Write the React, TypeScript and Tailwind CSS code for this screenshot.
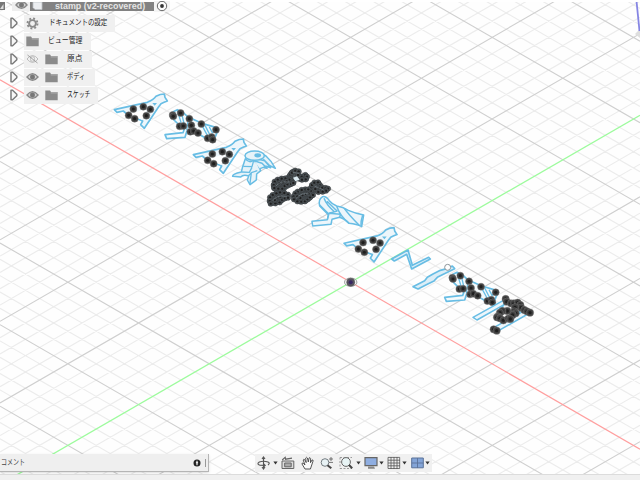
import React from "react";

const CX = 350.7;
const CY = 282.2;
const SLOPE = 40.8 / 70.7;
const BLUE = "#68bde4";

function gridLine(k: number, dir: 1 | -1) {
  const c = CY + k * 16.32;
  return `M0 ${c - dir * SLOPE * CX}L640 ${c + dir * SLOPE * (640 - CX)}`;
}

const steps = Array.from({ length: 90 }, (_, i) => i - 45);
const minor = steps
  .filter((k) => k % 5 !== 0)
  .map((k) => gridLine(k, 1) + gridLine(k, -1))
  .join("");
const major = steps
  .filter((k) => k % 5 === 0 && k !== 0)
  .map((k) => gridLine(k, 1) + gridLine(k, -1))
  .join("");

type P = [number, number];

function Dots({ pts, r = 10.5, dense = false }: { pts: P[]; r?: number; dense?: boolean }) {
  return (
    <g>
      {pts.map(([x, y], i) => (
        <g key={i}>
          <circle cx={x} cy={y} r={r} fill={dense ? "#4b5155" : "#404040"} stroke={dense ? "#333638" : "#777777"} strokeWidth={1.5} />
          <circle cx={x} cy={y} r={r * 0.45} fill="#1e1e1e" />
        </g>
      ))}
    </g>
  );
}

function LetterA({ x, y }: { x: number; y: number }) {
  return (
    <g transform={`translate(${x} ${y}) scale(.33333)`}>
      <path d="M43 74L142 52Q160 45 168 34Q181 27 193 27L195 37L202 48Q192 52 183 56L176 65L133 130L122 119L128 108L121 105L87 94L77 84L70 78L51 82Z" fill="#edf6fb" stroke={BLUE} strokeWidth={5} strokeLinejoin="round" />
      <path d="M84 86L141 73L126 104Z" fill="#fff" />
      <path d="M157 54L171 54L164 62Z" fill={BLUE} />
      <Dots pts={[[100, 72], [130, 65], [151, 73], [139, 92], [86, 91], [104, 101]]} />
    </g>
  );
}

function LetterS({ x, y }: { x: number; y: number }) {
  return (
    <g transform={`translate(${x} ${y}) scale(.33333)`} strokeLinejoin="round">
      <path d="M218 90L220 80L232 74L249 82L264 96L306 115L350 128L354 136L346 155L338 169L322 162L294 146L260 140L255 157L200 161L195 149L249 143L256 124L239 121L222 105Z" fill="#f4fafc" stroke={BLUE} strokeWidth={5} />
      <path d="M232 76L243 112L240 125M245 85L253 120M303 116L322 151M315 121L337 164M328 126L337 143L352 132M265 100L260 137" fill="none" stroke={BLUE} strokeWidth={4} />
      <Dots pts={[[218, 90], [220, 94], [242, 84], [268, 101], [304, 117], [348, 134], [239, 124], [250, 123], [274, 121], [271, 140], [281, 138], [294, 144], [323, 160], [335, 156], [338, 164]]} />
    </g>
  );
}

const clusterDots: P[] = [
  [106, 60], [111, 53], [121, 47], [131, 49], [129, 60], [140, 65], [151, 60], [156, 65], [152, 73], [141, 74], [105, 69],
  [116, 78], [103, 74], [91, 70], [80, 71], [68, 74], [59, 80], [56, 90], [58, 99], [70, 101], [82, 101], [89, 93], [98, 88], [108, 87], [115, 84], [73, 85], [84, 82], [95, 79],
  [99, 119], [88, 114], [75, 112], [64, 115], [53, 120], [45, 127], [44, 138], [47, 146], [61, 145], [74, 142], [81, 134], [90, 130], [99, 128], [65, 128], [76, 125], [59, 135],
  [151, 103], [140, 105], [128, 110], [121, 115], [116, 124], [117, 133], [127, 139], [139, 140], [150, 139], [158, 133], [165, 127], [174, 120], [167, 108], [160, 103], [143, 121], [153, 117], [136, 129], [127, 124], [161, 116],
  [169, 97], [171, 90], [178, 83], [189, 82], [195, 91], [193, 98], [202, 98], [212, 99], [219, 101], [213, 107], [203, 110], [190, 111], [181, 102],
];

const cluster2: P[] = [
  [317, 177], [320, 185], [333, 190], [342, 190], [353, 188], [361, 195], [363, 203], [373, 210], [381, 214], [390, 218], [345, 202], [343, 214], [347, 220], [338, 225], [322, 213], [307, 213], [300, 218], [294, 229], [291, 232], [300, 235], [310, 241], [325, 236], [331, 237], [281, 268], [290, 272],
];

function Scene() {
  return (
    <svg className="absolute inset-0" width="640" height="480" viewBox="0 0 640 480">
      <path d={minor} stroke="#ececec" strokeWidth={1.15} fill="none" />
      <path d={major} stroke="#cfcfcf" strokeWidth={1.1} fill="none" />
      <path d={gridLine(0, 1)} stroke="#ff9f9f" strokeWidth={1.2} />
      <path d={gridLine(0, -1)} stroke="#9dfb9d" strokeWidth={1.3} />

      <LetterA x={100} y={85} />
      <LetterS x={100} y={85} />
      <LetterA x={179} y={130} />

      <g transform="translate(180 130) scale(.33333)" stroke={BLUE} strokeWidth={4.5} strokeLinejoin="round" fill="#e6f3f9">
        <path d="M188 110L196 86Q206 100 220 92L232 100L242 122L230 132L229 150L210 164L202 150L206 138Q190 132 182 141L158 139Q156 132 184 126Z" />
        <path d="M222 92L246 100L261 115L250 112L240 116M230 86L254 92L272 113L256 108M246 72L258 78Q276 94 286 115L268 106L250 88" />
        <ellipse cx="224" cy="77" rx="29" ry="14" />
        <ellipse cx="233" cy="76" rx="8" ry="4" fill={BLUE} />
        <path d="M190 109L216 110L221 92M185 126L208 127L216 112M205 138L214 128L232 122M214 128L210 160" fill="none" strokeWidth={4} />
      </g>

      <g transform="translate(255 155) scale(.33333)">
        <path d="M98 56Q108 37 124 41L138 57L155 53Q165 62 160 78L140 82L120 77L122 87Q108 98 96 103L90 110L105 118Q110 130 92 137Q73 154 42 152Q34 142 40 126L58 110Q44 105 50 84Q65 62 92 64ZM113 118Q130 94 162 97L176 77L197 78L204 92L226 98Q223 112 203 118L181 115L178 126Q160 149 132 148L110 135Z" fill="#4d5458" />
        <Dots pts={clusterDots} r={8} dense />
        <g fill="none" stroke="#78838a" strokeWidth={2}>
          <path d="M63 93Q75 77 104 81M53 138Q63 119 95 124M123 131Q139 111 163 117M178 93L206 105M113 52L132 55" />
        </g>
        <path d="M114 68L126 64L134 74L121 79Z" fill="#dcebf2" />
        <g stroke={BLUE} strokeWidth={4.5} strokeLinejoin="round" fill="#edf6fb">
          <path d="M203 125Q189 133 194 153L220 179L217 194L171 199L173 213L228 208L231 193L254 187Q271 192 282 205Q306 207 320 215L326 180Q298 174 280 166Q264 156 245 153Q231 147 223 137Q213 123 203 125Z" />
          <path d="M207 130Q215 151 239 171M194 150L222 178M216 139L246 168L223 175M245 154Q256 185 282 205M268 160Q280 178 314 212M323 181Q317 199 318 212M217 194L222 175L256 178L254 188" fill="none" />
        </g>
      </g>

      <LetterA x={329.7} y={218.6} />

      <g transform="translate(330 190) scale(.33333)" stroke={BLUE} strokeWidth={5} strokeLinejoin="round" fill="#dceef7">
        <path d="M185 207L234 180L247 226L296 202L301 207L245 237L230 193L193 213Z" />
        <path d="M249 290L264 297L295 281L312 273L322 262L337 254L374 236L367 228L350 236L331 241L309 252L292 262L284 272Z" />
      </g>

      <LetterS x={379.7} y={247.7} />

      <g transform="translate(400 240) scale(.33333)">
        <circle cx="143" cy="82" r="9" fill="#fff" stroke="#8b9499" strokeWidth={3} />
        <g stroke={BLUE} strokeWidth={4.5} strokeLinejoin="round" fill="#edf6fb">
          <path d="M219 232L309 182L323 188L231 240Z" />
          <path d="M281 263L375 211L389 219L292 274Z" />
          <path d="M316 186L363 210L346 228L302 239L298 217Z" fill="none" />
        </g>
        <Dots pts={cluster2} r={11} />
      </g>

      <ellipse cx="350.7" cy="282.2" rx="6.2" ry="4.2" fill="#eee" fillOpacity={0.7} stroke="#888" strokeWidth={0.8} />
      <circle cx="350.7" cy="282.2" r="4" fill="#57525f" stroke="#555" strokeWidth={0.6} />
      <circle cx="350.7" cy="282.2" r="2" fill="#392763" />

      <path d="M640 29L635 34L640 38Z" fill="#dedede" />
      <path d="M636.6 2L639.5 31" stroke="#8585e4" strokeWidth={1.8} />
    </svg>
  );
}

function Eye({ hidden = false }: { hidden?: boolean }) {
  return (
    <svg width="13" height="12" viewBox="0 0 13 12" className="shrink-0" fill="none">
      <path d="M1 6Q6.5-.8 12 6Q6.5 12.8 1 6Z" fill={hidden ? "#f7f7f7" : "#ddd"} stroke={hidden ? "#aaa" : "#888"} strokeWidth={hidden ? 0.8 : 1.4} />
      <circle cx="6.5" cy="6" r="2.3" fill={hidden ? "#eee" : "#777"} stroke={hidden ? "#aaa" : "#777"} strokeWidth={0.7} />
      {hidden && <path d="M1.5 2L11.5 10" stroke="#999" strokeWidth={0.9} />}
    </svg>
  );
}

function Folder() {
  return (
    <svg width="13" height="11" viewBox="0 0 13 11" className="shrink-0">
      <path d="M.3 .6H5L6 2.1H12.7V10.2H.3Z" fill="#8b8b8b" />
      <path d="M5.8 2.9H12.7" stroke="#c9c9c9" strokeWidth={0.7} />
    </svg>
  );
}

function Gear() {
  return (
    <svg width="13" height="13" viewBox="0 0 13 13" className="shrink-0" fill="none" stroke="#8a8a8a">
      <circle cx="6.5" cy="6.5" r="3.4" strokeWidth={1.9} />
      <circle cx="6.5" cy="6.5" r="5" strokeWidth={1.9} strokeDasharray="1.9 2.03" />
    </svg>
  );
}

function Row({ width, icon, eye, label, scale, gap }: { width: string; icon: React.ReactNode; eye?: React.ReactNode; label: string; scale: string; gap: string }) {
  return (
    <div className="flex h-[18px] items-center pl-[9px]">
      <svg width="15" height="12" viewBox="0 0 15 12" className="shrink-0">
        <path d="M2 1.2V10.8H3.6L7.8 6.7V5.3L3.6 1.2Z" fill="#f7f7f7" stroke="#7c7c7c" strokeWidth={1.5} strokeLinejoin="round" />
      </svg>
      <div className={`flex h-[17px] items-center bg-[#f0f0f0] pl-[2px] ${width}`}>
        {eye && <span className="mr-[6px] flex">{eye}</span>}
        {icon}
        <span className={`inline-block origin-left whitespace-nowrap text-[8px] leading-none text-[#222] ${gap} ${scale}`}>{label}</span>
      </div>
    </div>
  );
}

function Browser() {
  return (
    <div className="flex w-[180px] flex-col">
      <div className="flex h-[9px] items-center">
        <svg width="5" height="9" viewBox="0 0 5 9" className="shrink-0">
          <path d="M0 0H5V8H0Z" fill="#777" />
          <path d="M0 7L3.5 2V7Z" fill="#ddd" />
        </svg>
        <div className="ml-[7px] flex h-[9px] w-[18px] items-start justify-center overflow-hidden bg-[#eee]">
          <div className="-mt-[3px]"><Eye /></div>
        </div>
        <div className="flex h-[9px] w-[124px] items-center bg-[#828282] pl-[2px]">
          <svg width="11" height="9" viewBox="0 0 11 9" className="shrink-0">
            <path d="M1 0V5.5L3 7.5H10V0Z" fill="#eceef1" stroke="#bcc0c5" strokeWidth={0.8} />
          </svg>
          <span className="ml-[12px] inline-block origin-left whitespace-nowrap text-[9px] font-bold leading-[9px] text-[#e6e6e6] scale-x-[0.99]">stamp (v2-recovered)</span>
        </div>
        <svg width="16" height="11" viewBox="0 0 16 11" className="shrink-0 bg-[#f4f4f4]">
          <circle cx="8" cy="5" r="4.7" fill="#fafafa" stroke="#666" strokeWidth={1} />
          <circle cx="8" cy="5" r="1.9" fill="#333" />
        </svg>
      </div>
      <div className="flex flex-col pt-[3px]">
        <Row width="w-[91px]" icon={<Gear />} label="ドキュメントの設定" scale="scale-x-[0.81]" gap="ml-[10px]" />
        <Row width="w-[67px]" icon={<Folder />} label="ビュー管理" scale="scale-x-[0.86]" gap="ml-[9px]" />
        <Row width="w-[68px]" eye={<Eye hidden />} icon={<Folder />} label="原点" scale="scale-x-[0.97]" gap="ml-[9px]" />
        <Row width="w-[71px]" eye={<Eye />} icon={<Folder />} label="ボディ" scale="scale-x-[0.78]" gap="ml-[9px]" />
        <Row width="w-[74px]" eye={<Eye />} icon={<Folder />} label="スケッチ" scale="scale-x-[0.73]" gap="ml-[9px]" />
      </div>
    </div>
  );
}

function Caret() {
  return (
    <svg width="5" height="4" viewBox="0 0 5 4" className="shrink-0">
      <path d="M.4.5H4.6L2.5 3.5Z" fill="#333" />
    </svg>
  );
}

function Toolbar() {
  return (
    <div className="flex h-[18px] w-[177px] items-center bg-[#f0f0f0] pl-[2px]">
      <svg width="14" height="14" viewBox="0 0 14 14" fill="none" stroke="#555" strokeWidth={1.1}>
        <path d="M6.5 1V13M5 3L6.5 1L8 3M5 11L6.5 13L8 11" />
        <path d="M11 9Q13.5 7.2 11 6Q6.5 4.6 2.3 6Q-.8 8 3 9.2L8 9.4M6.5 7.7L8.2 9.4L6.3 11" />
      </svg>
      <div className="ml-[2px] flex"><Caret /></div>
      <svg className="ml-[3px]" width="14" height="14" viewBox="0 0 14 14" fill="none" stroke="#666">
        <path d="M1 5H12.8V12.5H1Z" fill="#ddd" />
        <path d="M3.7 7H10.2V10.8H3.7Z" fill="#aaa" />
        <path d="M1.2 4L4.2 1.4L4.6 3.2L11 2.2" strokeWidth={1.2} />
      </svg>
      <svg className="ml-[6px]" width="13" height="14" viewBox="0 0 13 14" fill="#fafafa" stroke="#444" strokeWidth={0.9}>
        <path d="M4 13L1 8Q.8 6.6 2.2 7.2L4 9L2.2 4Q2.7 2.6 3.8 3.8L5.2 6.6L4.7 2Q5.6.6 6.4 2L7.3 6L8 2.1Q9.1 1 9.6 2.5L9.5 6.7L11 4Q12.5 3.5 12 5.2L10.4 10L9.4 13Z" />
      </svg>
      <svg className="ml-[6px]" width="14" height="14" viewBox="0 0 14 14" fill="none">
        <circle cx="5" cy="6.5" r="3.8" fill="#e8f2f5" stroke="#737b80" />
        <path d="M7.5 9.2L11.3 12.3" stroke="#444" strokeWidth={2} />
        <path d="M9 3H13M11 1V5M9 6.4H13" stroke="#555" strokeWidth={0.8} />
      </svg>
      <svg className="ml-[5px]" width="15" height="14" viewBox="0 0 15 14" fill="none">
        <path d="M1 1.5H13M1 12.5H13M1 1.5V12.5" stroke="#777" strokeWidth={0.7} strokeDasharray="2 1.5" />
        <circle cx="7" cy="6" r="4.4" fill="#e8f4f5" stroke="#666" />
        <path d="M10 9L13.2 12.2" stroke="#444" strokeWidth={2.1} />
      </svg>
      <div className="ml-[2px] flex"><Caret /></div>
      <svg className="ml-[3px]" width="14" height="14" viewBox="0 0 14 14">
        <path d="M1 1.7H13V9.7H1Z" fill="#8faee1" stroke="#666" strokeWidth={1.2} />
        <path d="M4 10.6H10L11 12.8H4Z" fill="#888" />
      </svg>
      <div className="ml-[1px] flex"><Caret /></div>
      <svg className="ml-[3px]" width="14" height="14" viewBox="0 0 14 14" fill="none">
        <path d="M1 1.4H12.7V12.5H1ZM4 1V13M7 1V13M10 1V13M1 4.2H13M1 7H13M1 9.8H13" stroke="#555" strokeWidth={0.8} />
      </svg>
      <div className="ml-[1px] flex"><Caret /></div>
      <svg className="ml-[4px]" width="13" height="12" viewBox="0 0 13 12">
        <path d="M.7 1H12.3V10.8H.7Z" fill="#83a4d7" stroke="#5b7299" />
        <path d="M6.5 1V11M.7 6H12.3" stroke="#5b7299" strokeWidth={0.9} />
      </svg>
      <div className="ml-[1px] flex"><Caret /></div>
    </div>
  );
}

export default function App() {
  return (
    <div className="relative h-[480px] w-[640px] overflow-hidden bg-[#fefefe] font-['Liberation_Sans','Noto_Sans_CJK_JP',sans-serif]">
      <Scene />
      <div className="relative flex h-[480px] flex-col">
        <div className="h-[2px] bg-white" />
        <Browser />
        <div className="flex-1" />
        <div className="flex h-[20px] items-start">
          <div className="flex h-[18px] w-[209px] items-center border-r border-b border-[#b5b5b5] bg-[#efefef] pl-px shadow-sm">
            <span className="inline-block origin-left whitespace-nowrap text-[8px] leading-none text-[#444] scale-x-[0.75]">コメント</span>
            <div className="flex-1" />
            <svg width="8" height="8" viewBox="0 0 8 8">
              <circle cx="4" cy="4" r="3.5" fill="#222" />
              <path d="M4 1.8V6.2M2.9 3.8H5.1" stroke="#fff" strokeWidth={1.1} />
            </svg>
            <div className="mr-[2px] ml-[4px] h-[8px] w-px bg-[#999]" />
          </div>
          <div className="w-[46px]" />
          <Toolbar />
        </div>
        <div className="h-[6px] border-t border-[#dcdcdc] bg-[#f0f0f0]" />
      </div>
    </div>
  );
}
